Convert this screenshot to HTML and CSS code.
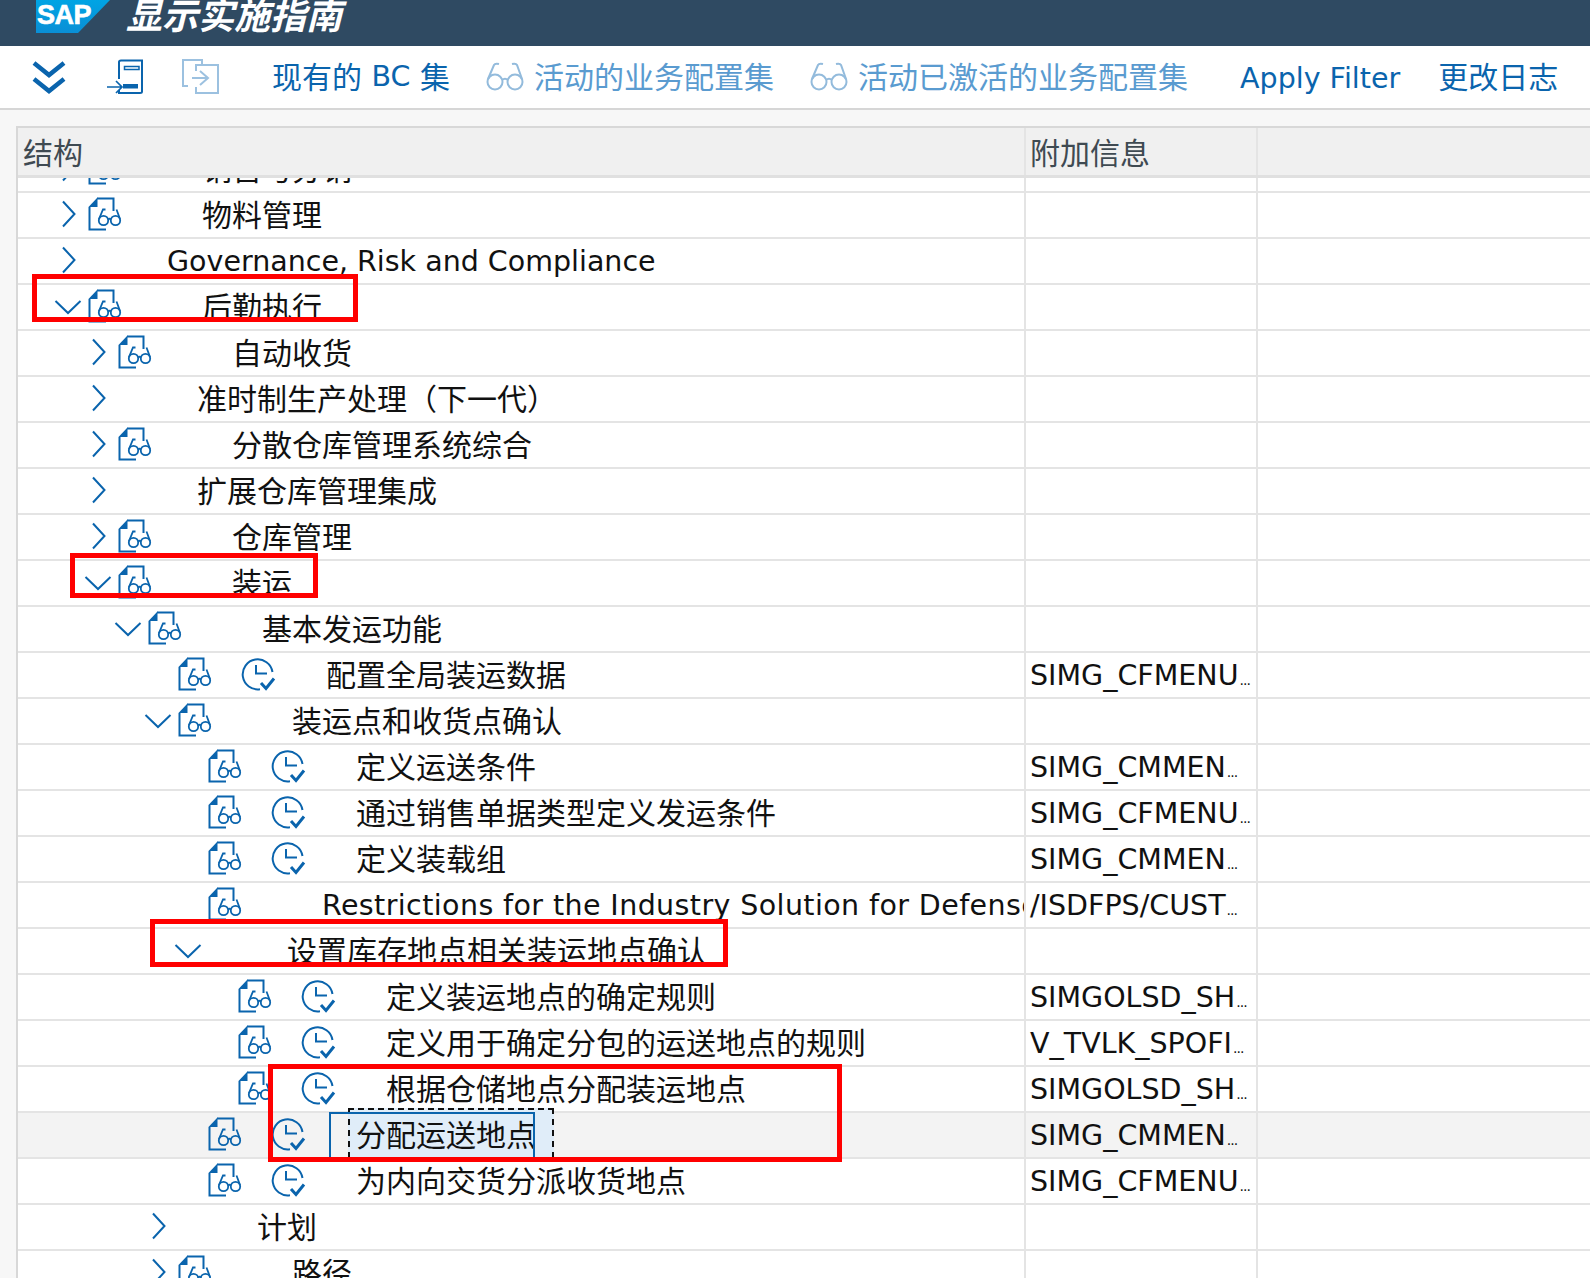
FILE: index.html
```html
<!DOCTYPE html>
<html lang="zh">
<head>
<meta charset="utf-8">
<title>显示实施指南</title>
<link rel="stylesheet" href="styles.css">
</head>
<body>
<svg class="defs" width="0" height="0">
  <symbol id="doc" viewBox="0 0 36 36">
    <path d="M18 32.500H1.500V10M9 1.500H25.500V14" fill="none" stroke="currentColor" stroke-width="2"/>
    <path d="M.5 10L9.500 .5V10Z" fill="currentColor"/>
    <g fill="none" stroke="currentColor" stroke-width="1.800">
      <circle cx="15.500" cy="23.500" r="4.700"/><circle cx="27.500" cy="23.500" r="4.700"/>
      <path d="M20.200 22.500Q21.500 21 22.800 22.500M11 22L15 12.500H17.500M32 22L28.500 12.500"/>
    </g>
  </symbol>
  <symbol id="clock" viewBox="0 0 36 36">
    <g fill="none" stroke="currentColor">
      <path d="M19 32.200A15 15 0 1 1 31.500 15" stroke-width="2"/>
      <path d="M15 8V16.500H26" stroke-width="2"/>
      <path d="M20 26L25 31.500L33 21.500" stroke-width="3"/>
    </g>
  </symbol>
  <symbol id="right" viewBox="0 0 16 30"><path d="M2 2.500L13.500 15L2 27.500" fill="none" stroke="currentColor" stroke-width="2"/></symbol>
  <symbol id="down" viewBox="0 0 28 16"><path d="M1.500 2L14 14L26.500 2" fill="none" stroke="currentColor" stroke-width="2"/></symbol>
  <symbol id="glasses" viewBox="0 0 38 30">
    <g fill="none" stroke="currentColor" stroke-width="2">
      <circle cx="9" cy="20" r="7.500"/><circle cx="29" cy="20" r="7.500"/>
      <path d="M16 18Q19 15.500 22 18M2 17L8 3Q9 1 13 2M36 17L31 3Q30 1 26 2"/>
    </g>
  </symbol>
</svg>

<header class="shell">
  <div class="logo"><span class="logo-text">SAP</span></div>
  <h1 class="title">显示实施指南</h1>
</header>

<nav class="toolbar">
  <svg class="tool-ic tool-chev" viewBox="0 0 34 34"><path d="M2 3L17 15L32 3M2 19L17 31L32 19" fill="none" stroke="currentColor" stroke-width="4.500"/></svg>
  <svg class="tool-ic tool-nav" viewBox="0 0 38 36"><path d="M13 20V3Q13 1.500 15 1.500H36V32.500Q36 34 34 34H13V31" fill="none" stroke="currentColor" stroke-width="2"/><path d="M18.500 7.500H33V10.500H18.500Z" fill="none" stroke="currentColor" stroke-width="1.500"/><path d="M17 25H32V29.500H17Z" fill="currentColor"/><path d="M1 28H15M10 22L16 28L10 34" fill="none" stroke="currentColor" stroke-width="1.700"/></svg>
  <svg class="tool-ic tool-copy off" viewBox="0 0 38 38"><path d="M7 28H2V2H21V7M15 13V7H37V35H15V29M11 20H27M19 13L27 20L19 27" fill="none" stroke="currentColor" stroke-width="2"/></svg>
  <a class="tool-link first">现有的 <span class="lat">BC</span> 集</a>
  <a class="tool-link off-gap off"><svg class="glass"><use href="#glasses"/></svg>活动的业务配置集</a>
  <a class="tool-link off-gap off"><svg class="glass"><use href="#glasses"/></svg>活动已激活的业务配置集</a>
  <a class="tool-link apply"><span class="lat">Apply Filter</span></a>
  <a class="tool-link log">更改日志</a>
</nav>

<main class="content">
  <div class="table">
    <div class="row head">
      <div class="cell main-cell"><span class="label">结构</span></div>
      <div class="cell info-cell"><span class="label">附加信息</span></div>
      <div class="cell"></div>
    </div>
    <div class="body">
      <div class="row clipped"><div class="cell main-cell lv1"><svg class="chev-r"><use href="#right"/></svg><svg class="doc"><use href="#doc"/></svg><span class="label">销售与分销</span></div><div class="cell info-cell"></div><div class="cell"></div></div>
      <div class="row"><div class="cell main-cell lv1"><svg class="chev-r"><use href="#right"/></svg><svg class="doc"><use href="#doc"/></svg><span class="label">物料管理</span></div><div class="cell info-cell"></div><div class="cell"></div></div>
      <div class="row"><div class="cell main-cell lv1"><svg class="chev-r"><use href="#right"/></svg><i class="nodoc"></i><span class="lat">Governance, Risk and Compliance</span></div><div class="cell info-cell"></div><div class="cell"></div></div>
      <div class="row"><div class="cell main-cell lv1"><svg class="chev-d"><use href="#down"/></svg><svg class="doc"><use href="#doc"/></svg><span class="label">后勤执行</span></div><div class="cell info-cell"></div><div class="cell"></div></div>
      <div class="row"><div class="cell main-cell lv2"><svg class="chev-r"><use href="#right"/></svg><svg class="doc"><use href="#doc"/></svg><span class="label">自动收货</span></div><div class="cell info-cell"></div><div class="cell"></div></div>
      <div class="row"><div class="cell main-cell lv2"><svg class="chev-r"><use href="#right"/></svg><i class="nodoc"></i><span class="label">准时制生产处理（下一代）</span></div><div class="cell info-cell"></div><div class="cell"></div></div>
      <div class="row"><div class="cell main-cell lv2"><svg class="chev-r"><use href="#right"/></svg><svg class="doc"><use href="#doc"/></svg><span class="label">分散仓库管理系统综合</span></div><div class="cell info-cell"></div><div class="cell"></div></div>
      <div class="row"><div class="cell main-cell lv2"><svg class="chev-r"><use href="#right"/></svg><i class="nodoc"></i><span class="label">扩展仓库管理集成</span></div><div class="cell info-cell"></div><div class="cell"></div></div>
      <div class="row"><div class="cell main-cell lv2"><svg class="chev-r"><use href="#right"/></svg><svg class="doc"><use href="#doc"/></svg><span class="label">仓库管理</span></div><div class="cell info-cell"></div><div class="cell"></div></div>
      <div class="row"><div class="cell main-cell lv2"><svg class="chev-d"><use href="#down"/></svg><svg class="doc"><use href="#doc"/></svg><span class="label">装运</span></div><div class="cell info-cell"></div><div class="cell"></div></div>
      <div class="row"><div class="cell main-cell lv3"><svg class="chev-d"><use href="#down"/></svg><svg class="doc"><use href="#doc"/></svg><span class="label">基本发运功能</span></div><div class="cell info-cell"></div><div class="cell"></div></div>
      <div class="row"><div class="cell main-cell lv4"><i class="nochev"></i><svg class="doc with-clock"><use href="#doc"/></svg><svg class="clock"><use href="#clock"/></svg><span class="label">配置全局装运数据</span></div><div class="cell info-cell"><span class="lat">SIMG_CFMENU<span class="dots">...</span></span></div><div class="cell"></div></div>
      <div class="row"><div class="cell main-cell lv4"><svg class="chev-d"><use href="#down"/></svg><svg class="doc"><use href="#doc"/></svg><span class="label">装运点和收货点确认</span></div><div class="cell info-cell"></div><div class="cell"></div></div>
      <div class="row"><div class="cell main-cell lv5"><i class="nochev"></i><svg class="doc with-clock"><use href="#doc"/></svg><svg class="clock"><use href="#clock"/></svg><span class="label">定义运送条件</span></div><div class="cell info-cell"><span class="lat">SIMG_CMMEN<span class="dots">...</span></span></div><div class="cell"></div></div>
      <div class="row"><div class="cell main-cell lv5"><i class="nochev"></i><svg class="doc with-clock"><use href="#doc"/></svg><svg class="clock"><use href="#clock"/></svg><span class="label">通过销售单据类型定义发运条件</span></div><div class="cell info-cell"><span class="lat">SIMG_CFMENU<span class="dots">...</span></span></div><div class="cell"></div></div>
      <div class="row"><div class="cell main-cell lv5"><i class="nochev"></i><svg class="doc with-clock"><use href="#doc"/></svg><svg class="clock"><use href="#clock"/></svg><span class="label">定义装载组</span></div><div class="cell info-cell"><span class="lat">SIMG_CMMEN<span class="dots">...</span></span></div><div class="cell"></div></div>
      <div class="row"><div class="cell main-cell lv5"><i class="nochev"></i><svg class="doc"><use href="#doc"/></svg><span class="lat wide">Restrictions for the Industry Solution for Defense</span></div><div class="cell info-cell"><span class="lat">/ISDFPS/CUST<span class="dots">...</span></span></div><div class="cell"></div></div>
      <div class="row"><div class="cell main-cell lv5"><svg class="chev-d"><use href="#down"/></svg><i class="nodoc"></i><span class="label">设置库存地点相关装运地点确认</span></div><div class="cell info-cell"></div><div class="cell"></div></div>
      <div class="row"><div class="cell main-cell lv6"><i class="nochev"></i><svg class="doc with-clock"><use href="#doc"/></svg><svg class="clock"><use href="#clock"/></svg><span class="label">定义装运地点的确定规则</span></div><div class="cell info-cell"><span class="lat">SIMGOLSD_SH<span class="dots">...</span></span></div><div class="cell"></div></div>
      <div class="row"><div class="cell main-cell lv6"><i class="nochev"></i><svg class="doc with-clock"><use href="#doc"/></svg><svg class="clock"><use href="#clock"/></svg><span class="label">定义用于确定分包的运送地点的规则</span></div><div class="cell info-cell"><span class="lat">V_TVLK_SPOFI<span class="dots">...</span></span></div><div class="cell"></div></div>
      <div class="row"><div class="cell main-cell lv6"><i class="nochev"></i><svg class="doc with-clock"><use href="#doc"/></svg><svg class="clock"><use href="#clock"/></svg><span class="label">根据仓储地点分配装运地点</span></div><div class="cell info-cell"><span class="lat">SIMGOLSD_SH<span class="dots">...</span></span></div><div class="cell"></div></div>
      <div class="row selected"><div class="cell main-cell lv5"><i class="nochev"></i><svg class="doc with-clock"><use href="#doc"/></svg><svg class="clock"><use href="#clock"/></svg><span class="label focus">分配运送地点</span></div><div class="cell info-cell"><span class="lat">SIMG_CMMEN<span class="dots">...</span></span></div><div class="cell"></div></div>
      <div class="row"><div class="cell main-cell lv5"><i class="nochev"></i><svg class="doc with-clock"><use href="#doc"/></svg><svg class="clock"><use href="#clock"/></svg><span class="label">为内向交货分派收货地点</span></div><div class="cell info-cell"><span class="lat">SIMG_CFMENU<span class="dots">...</span></span></div><div class="cell"></div></div>
      <div class="row"><div class="cell main-cell lv4"><svg class="chev-r"><use href="#right"/></svg><i class="nodoc"></i><span class="label">计划</span></div><div class="cell info-cell"></div><div class="cell"></div></div>
      <div class="row"><div class="cell main-cell lv4"><svg class="chev-r"><use href="#right"/></svg><svg class="doc"><use href="#doc"/></svg><span class="label">路径</span></div><div class="cell info-cell"></div><div class="cell"></div></div>
    </div>
  </div>
</main>

<div class="mark mark-a"></div>
<div class="mark mark-b"></div>
<div class="mark mark-c"></div>
<div class="mark mark-d"></div>
</body>
</html>
```

FILE: styles.css
```css
* { box-sizing: border-box; }
html, body { margin: 0; height: 100%; }
body {
  position: relative;
  width: 1590px;
  height: 1278px;
  overflow: hidden;
  background: #f7f7f7;
  font-family: "DejaVu Sans", "Noto Sans CJK SC", sans-serif;
  font-size: 30px;
  color: #111;
}
.defs { position: absolute; }
.lat { font-size: 28.500px; flex: none; }
.wide { letter-spacing: .4px; }

.shell {
  display: flex;
  height: 46px;
  background: #2f4a62;
  padding-left: 36px;
  overflow: hidden;
}
.logo {
  width: 74px;
  height: 33px;
  background: linear-gradient(#00a4e4, #0a8fd6);
  clip-path: polygon(0 0, 100% 0, 42px 100%, 0 100%);
}
.logo-text {
  display: block;
  font: bold 27px/30px "Liberation Sans", sans-serif;
  color: #fff;
  letter-spacing: -.5px;
  padding-left: 1px;
  -webkit-text-stroke: .6px #fff;
}
.title {
  margin: -10px 0 0 16px;
  font: italic bold 36px/46px "Noto Sans CJK SC", sans-serif;
  color: #fff;
}

.toolbar {
  display: flex;
  align-items: center;
  height: 64px;
  background: #fff;
  border-bottom: 2px solid #d6d6d6;
  padding-left: 32px;
  color: #0a64ad;
}
.tool-ic { flex: none; }
.tool-chev { width: 34px; height: 34px; }
.tool-nav { width: 38px; height: 36px; margin-left: 40px; }
.tool-copy { width: 38px; height: 38px; margin-left: 37px; }
.tool-link {
  display: flex;
  align-items: center;
  white-space: pre;
  padding-bottom: 4px;
}
.tool-link .lat { padding-top: 3px; }
.first { margin-left: 53px; }
.off { color: #5a9bd0; }
.tool-copy.off { color: #9cc1e0; }
.off-gap { margin-left: 36px; }
.off-gap + .off-gap { margin-left: 36px; }
.glass { width: 38px; height: 30px; margin: 4px 10px 0 0; color: #93bbdc; }
.apply { margin-left: 52px; padding-bottom: 0; }
.log { margin-left: 38px; }

.content { padding: 16px 0 0 16px; }
.table { border-top: 2px solid #d8d8d8; border-left: 2px solid #d8d8d8; }
.row {
  display: grid;
  grid-template-columns: 1008px 232px 1fr;
  height: 46px;
  background: #fff;
  border-bottom: 2px solid #e4e4e4;
}
.head {
  height: 50px;
  background: #f0f0f0;
  border-bottom: 3px solid #e0e0e0;
  color: #3f4a52;
}
.head .label { padding-top: 4px; }
.body { overflow: hidden; height: 1100px; }
.clipped { margin-top: -31px; }
.cell {
  display: flex;
  align-items: center;
  min-width: 0;
  overflow: hidden;
  white-space: nowrap;
  border-right: 2px solid #e4e4e4;
}
.cell:last-child { border-right: 0; }
.head .main-cell { padding-left: 5px; }
.info-cell { padding-left: 4px; }
.dots { font-size: 14px; letter-spacing: -1px; margin-left: 1px; }

.lv1 { padding-left: 38px; }
.lv2 { padding-left: 68px; }
.lv3 { padding-left: 98px; }
.lv4 { padding-left: 128px; }
.lv5 { padding-left: 158px; }
.lv6 { padding-left: 188px; }

.main-cell > svg { color: #0a64ad; flex: none; }
.chev-r { width: 16px; height: 30px; margin: 0 10px 2px 5px; }
.chev-d { width: 28px; height: 16px; margin: 0 5px 0 -2px; }
.nochev { flex: none; width: 31px; }
.doc { width: 36px; height: 36px; margin: 0 78px 0 1px; }
.doc.with-clock { margin-right: 27px; }
.clock { width: 36px; height: 36px; margin-right: 49px; }
.nodoc { flex: none; width: 80px; }
.label { flex: none; line-height: 36px; padding-top: 2px; }

.selected { background: #f3f3f3; }
.selected .main-cell { overflow: visible; }
.focus { position: relative; isolation: isolate; }
.focus::before {
  content: "";
  position: absolute;
  z-index: -1;
  top: -8px;
  bottom: -4px;
  left: -8px;
  width: 202px;
  background: #e0edf9;
  border: 2px dashed #111;
  border-bottom: 0;
}
.focus::after {
  content: "";
  position: absolute;
  top: -4px;
  bottom: -4px;
  left: -27px;
  width: 202px;
  border: 2px solid #0a64ad;
  border-bottom: 0;
}

.mark { position: absolute; border: 5px solid #f00; }
.mark-a { left: 32px; top: 274px; width: 326px; height: 48px; }
.mark-b { left: 70px; top: 553px; width: 248px; height: 45px; }
.mark-c { left: 150px; top: 919px; width: 578px; height: 48px; }
.mark-d { left: 268px; top: 1064px; width: 574px; height: 98px; }
```
